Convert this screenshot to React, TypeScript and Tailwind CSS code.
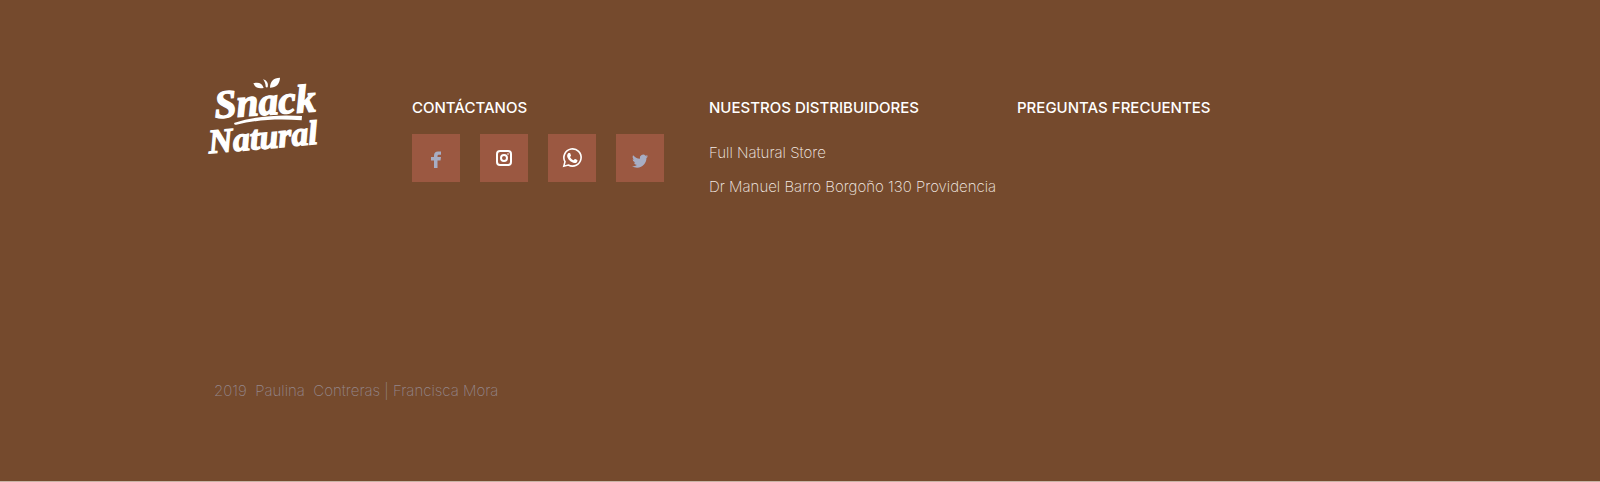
import type { ReactNode } from "react";

function Logo() {
  return (
    <svg viewBox="0 0 375 285" className="h-[95px] w-[125px]" fill="#fff" role="img" aria-label="Snack Natural">
      <g fontFamily="'Liberation Serif', serif" fontWeight="700" fontStyle="italic" stroke="#fff" strokeWidth="4">
        <text x="46" y="145" fontSize="119" transform="rotate(-4 46 145)">Snack</text>
        <text x="28" y="250" fontSize="102" transform="rotate(-5 28 250)">Natural</text>
      </g>
      <path d="M160 40c15-5 27 0 31 14-15 3-26-1-31-14z" />
      <path d="M189 28c12 3 17 12 14 24-3 1-5 0-6-2 0-8-3-16-8-22z" />
      <path d="M240 23c-1 19-12 30-30 30 0-18 10-30 30-30z" />
      <path d="M104 158c62-19 130-25 202-20l-1 13c-70-5-133-2-196 13-5 1-9-4-5-6z" />
    </svg>
  );
}

function SocialLink({ label, children }: { label: string; children: ReactNode }) {
  return (
    <a href="#" aria-label={label} className="flex size-12 items-center justify-center bg-[#9b5841]">
      {children}
    </a>
  );
}

function Social() {
  return (
    <div className="mt-4 flex gap-5">
      <SocialLink label="Facebook">
        <svg viewBox="0 0 48 48" className="size-12" fill="#a7adc4">
          <path d="M22 34v-7.500h-3v-3.500h3v-1.500c0-2.800 1.600-4 4-4h3v3.200h-2c-1 0-1.500.4-1.500 1.300v1H29l-.5 3.500h-3V34z" />
        </svg>
      </SocialLink>
      <SocialLink label="Instagram">
        <svg viewBox="0 0 48 48" className="size-12" fill="none" stroke="#fff" strokeWidth="2">
          <rect x="17" y="17" width="14" height="14" rx="3" />
          <circle cx="24" cy="24" r="3" />
          <circle cx="28" cy="20" r=".8" fill="#fff" stroke="none" />
        </svg>
      </SocialLink>
      <SocialLink label="WhatsApp">
        <svg viewBox="0 0 48 48" className="size-12" fill="none" stroke="#fff" strokeWidth="1.6">
          <path d="M15.800 32.200l1.200-4.500a8.600 8.600 0 1 1 3.300 3.300z" />
          <path
            fill="#fff"
            stroke="none"
            d="M20.500 19h1.200l.5.300.8 2.200-.1.500-.9 1.100c.8 1.500 2 2.600 3.700 3.200l1.100-1.200.5-.1 2 1 .2.400c0 1.700-1.400 2.700-2.900 2.600-3.800-.6-6.800-3.700-7.400-6.500-.2-1.500.3-2.800 1.300-3.500z"
          />
        </svg>
      </SocialLink>
      <SocialLink label="Twitter">
        <svg viewBox="0 0 48 48" className="size-12" fill="#a7adc4">
          <path
            transform="translate(16 20.500) scale(.67)"
            d="M23.950 2.570a10 10 0 0 1-2.820.78 4.960 4.960 0 0 0 2.160-2.730c-.95.560-2 .96-3.130 1.190a4.920 4.920 0 0 0-8.380 4.480C7.690 6.100 4.070 4.130 1.640 1.160a4.820 4.820 0 0 0-.67 2.480c0 1.710.87 3.210 2.190 4.100a4.900 4.900 0 0 1-2.230-.62v.06a4.920 4.920 0 0 0 3.950 4.830 4.990 4.990 0 0 1-2.210.08 4.940 4.940 0 0 0 4.600 3.420A9.870 9.870 0 0 1 0 17.540a13.990 13.990 0 0 0 7.550 2.210c9.050 0 14-7.500 14-13.980l-.02-.64a9.940 9.940 0 0 0 2.420-2.560z"
          />
        </svg>
      </SocialLink>
    </div>
  );
}

function Column({ title, children }: { title: string; children?: ReactNode }) {
  return (
    <section className="pt-7">
      <h2 className="text-[15px] leading-5 font-medium whitespace-nowrap">{title}</h2>
      {children}
    </section>
  );
}

export default function App() {
  return (
    <footer className="border-b border-[#c8b3a5] bg-[#754a2d] pt-[70px] pb-20 font-[Inter,sans-serif] text-white">
      <div className="mx-auto max-w-[1200px]">
        <div className="grid min-h-[270px] grid-cols-[212px_297px_308px_1fr] items-start">
          <a href="#" className="block">
            <Logo />
          </a>
          <Column title="CONTÁCTANOS">
            <Social />
          </Column>
          <Column title="NUESTROS DISTRIBUIDORES">
            <div className="mt-6 flex flex-col gap-3 text-[15px] leading-[22px] font-extralight whitespace-nowrap text-[#f4ece6]">
              <p>Full Natural Store</p>
              <p>Dr Manuel Barro Borgoño 130 Providencia</p>
            </div>
          </Column>
          <Column title="PREGUNTAS FRECUENTES" />
        </div>
        <p className="mt-[41px] pl-[14px] text-[15px] leading-5 font-extralight whitespace-pre text-[#94868a]">
          {"2019  Paulina  Contreras | Francisca Mora"}
        </p>
      </div>
    </footer>
  );
}
